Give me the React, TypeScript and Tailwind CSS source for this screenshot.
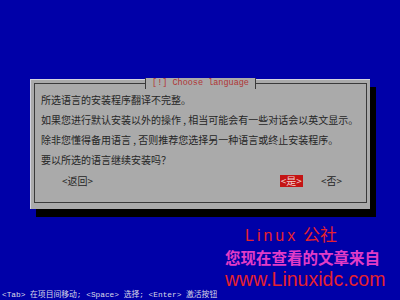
import React from "react";

const cjk = { fontFamily: '"Noto Sans CJK SC", "Noto Sans", sans-serif' };

export default function App() {
  return (
    <div className="relative w-[400px] h-[300px] overflow-hidden bg-[#0000a8] flex flex-col">
      <div className="mt-[79px] ml-[30px] w-[340px] h-[130px] bg-[#aaaaaa] border-t border-l border-[#d4d4e0] shadow-[6px_8px_0_#000] flex flex-col">
        <div className="mt-[3px] mx-[3px] mb-[6px] flex-1 border border-[#3a3a3a] flex flex-col">
          <div className="flex justify-center -mt-[6px] h-[11px]">
            <div
              className="bg-[#aaaaaa] border-l border-r border-[#3a3a3a] px-[6px] text-[8.5px] leading-[11px] text-[#b03434]"
              style={{ fontFamily: '"Liberation Mono", "DejaVu Sans Mono", monospace' }}
            >
              [!] Choose language
            </div>
          </div>
          <div className="pl-[6px] pt-[1px] text-[10px] leading-[20px] text-[#262626] whitespace-pre" style={cjk}>
            <div>所选语言的安装程序翻译不完整。</div>
            <div>如果您进行默认安装以外的操作 , 相当可能会有一些对话会以英文显示。</div>
            <div>除非您懂得备用语言 , 否则推荐您选择另一种语言或终止安装程序。</div>
            <div>要以所选的语言继续安装吗？</div>
            <div className="flex items-center h-[22px]">
              <span className="ml-[21px]">&lt;返回&gt;</span>
              <span className="flex-1" />
              <span className="bg-[#c41414] text-[#f0d0d0] px-[1px] leading-[12px]">&lt;是&gt;</span>
              <span className="ml-[18px] mr-[24px]">&lt;否&gt;</span>
            </div>
          </div>
        </div>
      </div>
      <div className="flex-1" />
      <div
        className="pl-[2px] h-[10px] text-[7.8px] leading-[10px] text-[#d8d8e8] whitespace-nowrap"
        style={{ fontFamily: '"Liberation Mono", "Noto Sans CJK SC", monospace' }}
      >
        &lt;Tab&gt; 在项目间移动; &lt;Space&gt; 选择; &lt;Enter&gt; 激活按钮
      </div>
      <div className="absolute left-[225px] top-[226px] flex flex-col items-start pointer-events-none">
        <div
          className="ml-[20px] text-[16px] leading-[20px] text-[#e6202e] whitespace-nowrap"
          style={{ fontFamily: '"Liberation Sans", "Noto Sans CJK SC", sans-serif' }}
        >
          <span className="tracking-[3px]">Linux</span>
          <span className="text-[17px]"> 公社</span>
        </div>
        <div
          className="mt-[2px] text-[15.5px] leading-[18px] font-bold text-[#e23cc6] whitespace-nowrap"
          style={cjk}
        >
          您现在查看的文章来自
        </div>
        <div
          className="mt-[1px] text-[19.5px] leading-[24px] text-[#e6202e] whitespace-nowrap"
          style={{ fontFamily: '"Liberation Sans", Arial, sans-serif' }}
        >
          www.Linuxidc.com
        </div>
      </div>
    </div>
  );
}
